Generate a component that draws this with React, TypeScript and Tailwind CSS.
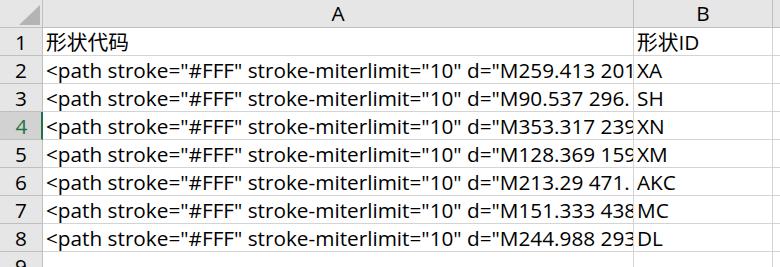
import React from "react";

const rows: [string, string][] = [
  ["形状代码", "形状ID"],
  ['<path stroke="#FFF" stroke-miterlimit="10" d="M259.413 201', "XA"],
  ['<path stroke="#FFF" stroke-miterlimit="10" d="M90.537 296.', "SH"],
  ['<path stroke="#FFF" stroke-miterlimit="10" d="M353.317 239', "XN"],
  ['<path stroke="#FFF" stroke-miterlimit="10" d="M128.369 159', "XM"],
  ['<path stroke="#FFF" stroke-miterlimit="10" d="M213.29 471.', "AKC"],
  ['<path stroke="#FFF" stroke-miterlimit="10" d="M151.333 438', "MC"],
  ['<path stroke="#FFF" stroke-miterlimit="10" d="M244.988 293', "DL"],
  ["", ""],
];

export default function App() {
  return (
    <div
      className="w-[780px] h-[267px] overflow-hidden bg-white text-[20.75px] text-black"
      style={{ fontFamily: '"Open Sans", "Noto Sans CJK SC", sans-serif' }}
    >
      <div className="grid grid-cols-[43px_591px_139px_1fr] grid-rows-[28px] auto-rows-[28px]">
        {/* header */}
        <div className="relative bg-[#e6e6e6] border-r border-b border-[#bfbfbf]">
          <svg className="absolute left-[19px] top-[5px]" width="21" height="20" viewBox="0 0 21 20">
            <polygon points="21,0 21,20 0,20" fill="#b4b4b4" />
          </svg>
        </div>
        <div className="bg-[#e6e6e6] border-r border-b border-[#bfbfbf] flex items-center justify-center pt-[1px]">A</div>
        <div className="bg-[#e6e6e6] border-r border-b border-[#bfbfbf] flex items-center justify-center pt-[1px]">B</div>
        <div className="bg-[#e6e6e6] border-b border-[#bfbfbf]" />
        {rows.map(([a, b], i) => {
          const sel = i === 3;
          return (
            <React.Fragment key={i}>
              <div
                className={
                  sel
                    ? "bg-[#d2d2d2] text-[#217346] border-r-2 border-r-[#217346] border-b border-b-[#bfbfbf] flex items-center justify-center pl-[2px] pt-[2px]"
                    : "bg-[#e6e6e6] border-r border-b border-[#bfbfbf] flex items-center justify-center pt-[2px]"
                }
              >
                {i + 1}
              </div>
              <div className="border-r border-b border-[#d4d4d4] overflow-hidden whitespace-nowrap pl-[3px] flex items-center pt-[2px]">
                {a}
              </div>
              <div className="border-r border-b border-[#d4d4d4] overflow-hidden whitespace-nowrap pl-[3px] flex items-center pt-[2px]">
                {b}
              </div>
              <div className="border-b border-[#d4d4d4]" />
            </React.Fragment>
          );
        })}
      </div>
    </div>
  );
}
